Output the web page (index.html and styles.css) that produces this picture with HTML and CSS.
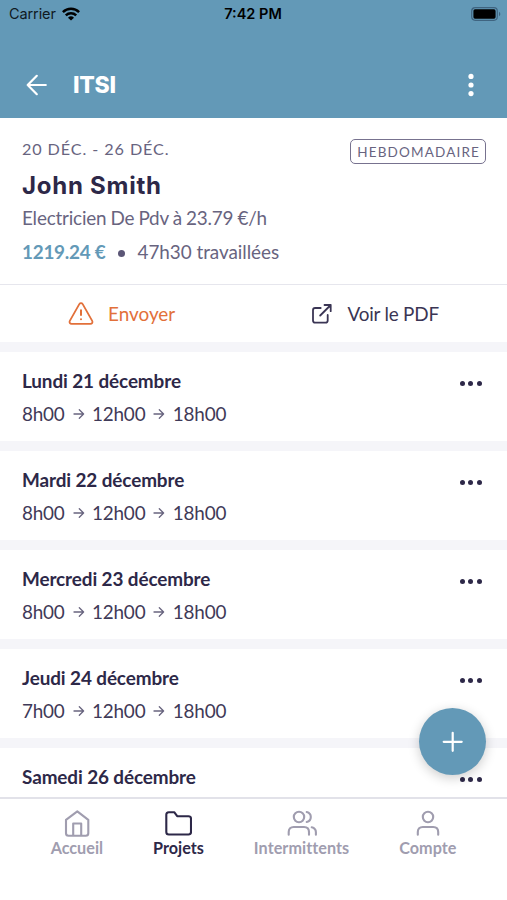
FILE: index.html
```html
<!DOCTYPE html>
<html lang="fr">
<head>
<meta charset="utf-8">
<title>ITSI</title>
<link rel="stylesheet" href="styles.css">
</head>
<body>

<div class="app">
  <header class="header">
    <div class="status">
      <div class="carrier">
        <span>Carrier</span>
        <svg width="18" height="14" viewBox="0 0 18 14" fill="none" stroke="#000" stroke-width="2.5">
          <path d="M.9 5.1a11.7 11.7 0 0 1 16.2 0"/>
          <path d="M3.8 8.4a7.5 7.5 0 0 1 10.4 0"/>
          <path d="M9 13.6L6 10.7a4.5 4.5 0 0 1 6 0z" fill="#000" stroke="none"/>
        </svg>
      </div>
      <span class="clock">7:42 PM</span>
      <svg class="battery" width="30" height="14" viewBox="0 0 30 14">
        <rect x=".7" y=".7" width="25.6" height="12.6" rx="3.5" fill="none" stroke="#3f6480" stroke-width="1.2"/>
        <rect x="2.4" y="2.3" width="22.2" height="9.4" rx="1.6"/>
        <path d="M28 4.8c1.8.7 1.8 3.7 0 4.4z" fill="#3f6480"/>
      </svg>
    </div>
    <div class="navbar">
      <svg width="22" height="22" viewBox="0 0 22 22" fill="none" stroke="#fff" stroke-width="2.2" stroke-linecap="round" stroke-linejoin="round"><path d="M19.8 11H1.7M10.8 1.8L1.7 11l9.1 9.2"/></svg>
      <h1>ITSI</h1>
      <svg class="kebab" width="6" height="24" viewBox="0 0 6 24" fill="#fff"><circle cx="3" cy="3.4" r="2.6"/><circle cx="3" cy="12" r="2.6"/><circle cx="3" cy="20.6" r="2.6"/></svg>
    </div>
  </header>

  <section class="summary">
    <div class="summary-top">
      <span class="period">20 DÉC. - 26 DÉC.</span>
      <span class="badge">HEBDOMADAIRE</span>
    </div>
    <h2>John Smith</h2>
    <p class="job">Electricien De Pdv à 23.79 €/h</p>
    <p class="total"><b>1219.24 €</b><i class="bullet"></i><span>47h30 travaillées</span></p>
  </section>

  <div class="actions">
    <a class="action send">
      <svg width="26" height="24" viewBox="0 0 26 24" fill="none" stroke="currentColor" stroke-width="1.8" stroke-linecap="round" stroke-linejoin="round">
        <path d="M11.3 2.1L1.8 18.9c-.8 1.5.2 2.9 1.8 2.9h18.8c1.6 0 2.6-1.4 1.8-2.9L14.7 2.1c-.8-1.3-2.6-1.3-3.4 0z"/>
        <path d="M13 8.3v4.6M13 17.2v.1" stroke-width="2"/>
      </svg>
      <span>Envoyer</span>
    </a>
    <a class="action pdf">
      <svg width="20" height="20" viewBox="0 0 20 20" fill="none" stroke="currentColor" stroke-width="1.8" stroke-linecap="round" stroke-linejoin="round"><path d="M8.700 4H3.200C1.900 4 1 4.900 1 6.200v10.300c0 1.300.9 2.200 2.200 2.200h10.300c1.300 0 2.200-.9 2.200-2.200V11M12.500 1h6.200v6.200M18.700 1L8.200 11.500"/></svg>
      <span>Voir le PDF</span>
    </a>
  </div>

  <main class="days">
    <article class="day">
      <div class="day-head"><h3>Lundi 21 décembre</h3><span class="dots"><i></i><i></i><i></i></span></div>
      <div class="hours"><span>8h00</span><svg viewBox="0 0 12 12"><path d="M1 6h9.600M6.300 1.700L10.600 6l-4.300 4.300"/></svg><span>12h00</span><svg viewBox="0 0 12 12"><path d="M1 6h9.600M6.300 1.700L10.600 6l-4.300 4.300"/></svg><span>18h00</span></div>
    </article>
    <article class="day">
      <div class="day-head"><h3>Mardi 22 décembre</h3><span class="dots"><i></i><i></i><i></i></span></div>
      <div class="hours"><span>8h00</span><svg viewBox="0 0 12 12"><path d="M1 6h9.600M6.300 1.700L10.600 6l-4.300 4.300"/></svg><span>12h00</span><svg viewBox="0 0 12 12"><path d="M1 6h9.600M6.300 1.700L10.600 6l-4.300 4.300"/></svg><span>18h00</span></div>
    </article>
    <article class="day">
      <div class="day-head"><h3>Mercredi 23 décembre</h3><span class="dots"><i></i><i></i><i></i></span></div>
      <div class="hours"><span>8h00</span><svg viewBox="0 0 12 12"><path d="M1 6h9.600M6.300 1.700L10.600 6l-4.300 4.300"/></svg><span>12h00</span><svg viewBox="0 0 12 12"><path d="M1 6h9.600M6.300 1.700L10.600 6l-4.300 4.300"/></svg><span>18h00</span></div>
    </article>
    <article class="day">
      <div class="day-head"><h3>Jeudi 24 décembre</h3><span class="dots"><i></i><i></i><i></i></span></div>
      <div class="hours"><span>7h00</span><svg viewBox="0 0 12 12"><path d="M1 6h9.600M6.300 1.700L10.600 6l-4.300 4.300"/></svg><span>12h00</span><svg viewBox="0 0 12 12"><path d="M1 6h9.600M6.300 1.700L10.600 6l-4.300 4.300"/></svg><span>18h00</span></div>
    </article>
    <article class="day">
      <div class="day-head"><h3>Samedi 26 décembre</h3><span class="dots"><i></i><i></i><i></i></span></div>
    </article>
    <button class="add" aria-label="Ajouter">
      <svg width="22" height="22" viewBox="0 0 22 22" fill="none" stroke="#fff" stroke-width="2.2" stroke-linecap="round"><path d="M10.700 1.800v18M1.700 10.800h18"/></svg>
    </button>
  </main>

  <nav class="tabs">
    <a class="tab home">
      <svg width="28" height="28" viewBox="0 0 28 28"><path d="M3 9.800L14.300 1.300l11 8.500v13.500c0 1.500-1 2.500-2.500 2.500H5.500C4 25.800 3 24.800 3 23.300zM10.200 25.800V13.500h8v12.300"/></svg>
      <span>Accueil</span>
    </a>
    <a class="tab projects active">
      <svg width="28" height="28" viewBox="0 0 28 28"><path d="M2.300 22V4.700c0-1.500 1-2.500 2.500-2.500h5.400l3 4h11.300c1.500 0 2.500 1 2.500 2.500V22c0 1.500-1 2.500-2.500 2.500H4.800c-1.500 0-2.500-1-2.500-2.500z"/></svg>
      <span>Projets</span>
    </a>
    <a class="tab people">
      <svg width="30" height="28" viewBox="0 0 30 28"><circle cx="12" cy="7" r="5.200"/><path d="M1.700 24.700V22c0-3.100 1.900-5 5-5H17c3.100 0 5 1.900 5 5v2.700M19.700 2c2.700.7 4.100 2.600 4.100 5s-1.400 4.300-4.100 5M24.700 17.300c2.600.7 4.200 2.500 4.200 4.900v2.500"/></svg>
      <span>Intermittents</span>
    </a>
    <a class="tab account">
      <svg width="28" height="28" viewBox="0 0 28 28"><circle cx="14" cy="7" r="5.200"/><path d="M3.800 24.700V22c0-3.100 1.900-5 5-5h10.400c3.100 0 5 1.900 5 5v2.700"/></svg>
      <span>Compte</span>
    </a>
  </nav>
</div>

</body>
</html>
```
FILE: styles.css
```css
* {
  box-sizing: border-box;
}

body {
  margin: 0;
  font-family: Lato, "Liberation Sans", sans-serif;
  color: #2d2848;
  background: #fff;
}

h1, h2, h3, p {
  margin: 0;
}

svg {
  display: block;
  flex-shrink: 0;
}

.app {
  width: 507px;
  height: 900px;
  display: flex;
  flex-direction: column;
  overflow: hidden;
}

.header {
  height: 118px;
  flex-shrink: 0;
  background: #6399b7;
}

.status {
  height: 27px;
  padding: 0 6px 0 9px;
  display: grid;
  grid-template-columns: 1fr auto 1fr;
  align-items: center;
  font-family: Inter, sans-serif;
  font-size: 14.5px;
  color: #101a22;
}

.carrier {
  display: flex;
  align-items: center;
  gap: 6px;
  letter-spacing: -0.1px;
}

.clock {
  margin-right: 4px;
  font-weight: 600;
  color: #000;
}

.battery {
  justify-self: end;
}

.navbar {
  height: 91px;
  padding: 25px 33px 0 26px;
  display: flex;
  align-items: center;
}

.navbar h1 {
  margin-left: 25px;
  font-family: Inter, sans-serif;
  font-size: 23px;
  font-weight: 800;
  letter-spacing: -0.3px;
  color: #fff;
}

.kebab {
  margin-left: auto;
}

.summary {
  height: 167px;
  flex-shrink: 0;
  padding: 20px 21px 0 22px;
  border-bottom: 1px solid #e6e6ed;
  color: #68647f;
}

.summary-top {
  display: flex;
  justify-content: space-between;
  height: 26px;
}

.period {
  font-size: 16.2px;
  line-height: 22px;
  letter-spacing: 0.9px;
}

.badge {
  height: 25px;
  margin-top: 1px;
  padding: 0 5px 0 6px;
  border: 1.4px solid #77728f;
  border-radius: 5px;
  font-size: 13.5px;
  line-height: 24px;
  letter-spacing: 1.17px;
}

.summary h2 {
  margin-top: 6px;
  font-family: Inter, sans-serif;
  font-size: 24px;
  font-weight: 700;
  line-height: 32px;
  letter-spacing: 0.75px;
  color: #2d2848;
}

.job {
  margin-top: 4px;
  font-size: 18.9px;
  line-height: 24px;
  letter-spacing: -0.2px;
  word-spacing: -0.5px;
}

.total {
  display: flex;
  align-items: center;
  margin-top: 10px;
  font-size: 18.9px;
  line-height: 24px;
  letter-spacing: -0.05px;
}

.total b {
  letter-spacing: -0.25px;
  color: #6399b7;
}

.bullet {
  width: 7px;
  height: 7px;
  margin: 2px 13px 0 12px;
  border-radius: 50%;
  background: #5b5676;
}

.actions {
  height: 57px;
  flex-shrink: 0;
  display: grid;
  grid-template-columns: 1fr 1fr;
  font-size: 18.9px;
}

.action {
  display: flex;
  align-items: center;
}

.send {
  padding-left: 68px;
  gap: 14px;
  color: #e2703a;
}

.pdf {
  padding-left: 58px;
  gap: 16px;
  letter-spacing: -0.2px;
  color: #3a3554;
}

.days {
  position: relative;
  height: 455px;
  flex-shrink: 0;
  background: #f5f5f9;
}

.day {
  height: 89px;
  margin-top: 10px;
  padding: 17px 25px 0 22px;
  background: #fff;
}

.day:last-of-type {
  height: 49px;
}

.day-head {
  display: flex;
  justify-content: space-between;
}

.day h3 {
  font-size: 18.9px;
  font-weight: 700;
  line-height: 24px;
  letter-spacing: -0.1px;
}

.dots {
  display: flex;
  gap: 3.6px;
  margin-top: 12px;
}

.dots i {
  width: 5px;
  height: 5px;
  border-radius: 50%;
  background: #2d2848;
}

.hours {
  display: flex;
  align-items: center;
  margin-top: 9px;
  font-size: 18.9px;
  line-height: 24px;
  letter-spacing: -0.2px;
  color: #3f3a58;
}

.hours svg {
  width: 12px;
  height: 12px;
  margin: 0 7.5px 0 7.9px;
  fill: none;
  stroke: #68647f;
  stroke-width: 1.3;
  stroke-linecap: round;
  stroke-linejoin: round;
}

.add {
  position: absolute;
  right: 21px;
  bottom: 22px;
  width: 67px;
  height: 67px;
  padding: 0;
  display: flex;
  align-items: center;
  justify-content: center;
  border: none;
  border-radius: 50%;
  background: #6399b7;
  box-shadow: 0 3px 12px rgba(0, 0, 0, 0.2);
}

.tabs {
  flex: 1;
  display: flex;
  justify-content: center;
  gap: 50px;
  padding-top: 11px;
  border-top: 2px solid #e2e2e9;
  color: #a09daf;
  font-size: 16.2px;
  font-weight: 700;
}

.tab {
  display: flex;
  flex-direction: column;
  align-items: center;
}

.tab span {
  line-height: 20px;
}

.tab svg {
  fill: none;
  stroke: currentColor;
  stroke-width: 2.1;
  stroke-linecap: round;
  stroke-linejoin: round;
}

.people {
  letter-spacing: 0.05px;
}

.active {
  color: #2d2848;
}
```
